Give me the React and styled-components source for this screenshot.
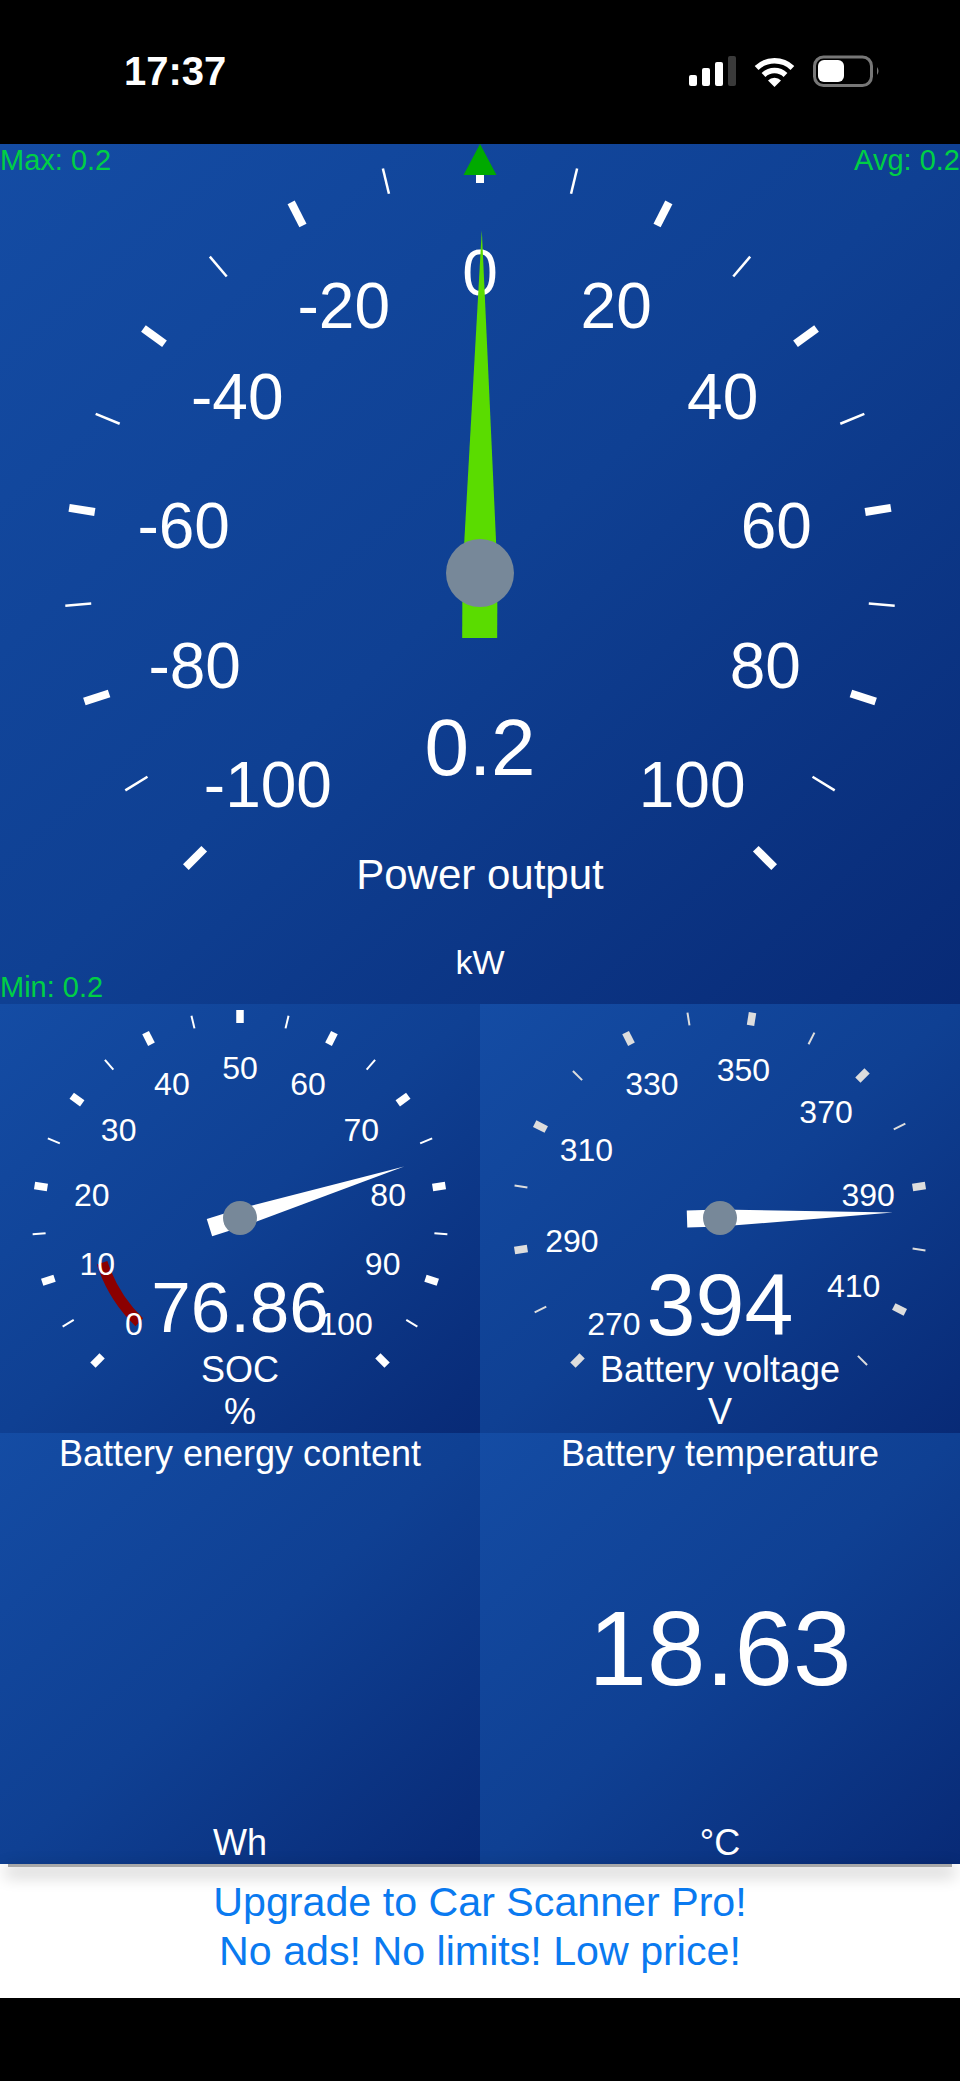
import styled, { createGlobalStyle } from "styled-components";

const GlobalStyle = createGlobalStyle`
  html, body {
    margin: 0;
    padding: 0;
    background: #000;
    font-family: "Liberation Sans", Arial, sans-serif;
  }
`;

const Screen = styled.div`
  width: 960px;
  height: 2081px;
  background: #000;
  color: #fff;
  display: flex;
  flex-direction: column;
  overflow: hidden;
`;

// Status bar
const StatusBar = styled.div`
  height: 144px;
  flex-shrink: 0;
  display: flex;
  align-items: flex-start;
  justify-content: space-between;
  padding: 0 80px 0 124px;
  box-sizing: border-box;
`;

const Clock = styled.div`
  margin-top: 49px;
  font-size: 40px;
  line-height: 44px;
  font-weight: 700;
`;

const StatusIcons = styled.svg`
  margin-top: 52px;
  width: 196px;
  height: 38px;
`;

// Panels
const Panel = styled.div`
  position: relative;
  height: ${(p) => p.$height}px;
  display: flex;
  flex-direction: column;
  align-items: center;
  justify-content: ${(p) => p.$justify || "flex-end"};
  background: linear-gradient(to bottom right, #144ca4 0%, #0f4093 50%, #082a76 100%);
  overflow: hidden;
`;

const Row = styled.div`
  display: grid;
  grid-template-columns: 1fr 1fr;
  position: relative;
`;

const BottomRow = styled(Row)`
  z-index: 2;
  &::after {
    content: "";
    position: absolute;
    left: 8px;
    right: 8px;
    bottom: -3px;
    height: 3px;
    background: #a8a8a8;
    box-shadow: 0 6px 16px 3px rgba(0, 0, 0, 0.22);
  }
`;

const Layer = styled.svg`
  position: absolute;
  inset: 0;
  width: 100%;
  height: 100%;
`;

const NeedleLayer = styled(Layer)`
  z-index: 2;
`;

const ScaleLabel = styled.span`
  position: absolute;
  z-index: 1;
  transform: translate(-50%, -50%);
  font-size: ${(p) => p.$size}px;
  line-height: 1;
  white-space: nowrap;
`;

const Stat = styled.div`
  position: absolute;
  z-index: 3;
  font-size: 29px;
  line-height: 30px;
  color: #00cf45;
  ${(p) => (p.$right ? "right: 0;" : "left: 0;")}
  ${(p) => (p.$bottom ? "bottom: 2px;" : "top: 1px;")}
`;

const Value = styled.div`
  position: relative;
  z-index: 3;
  font-size: ${(p) => p.$size}px;
  line-height: ${(p) => p.$line}px;
  margin-bottom: ${(p) => p.$gap || 0}px;
  white-space: nowrap;
`;

const BigValue = styled.div`
  flex: 1;
  display: flex;
  align-items: center;
  font-size: 105px;
  line-height: 1;
`;

const Caption = styled.div`
  position: relative;
  z-index: 3;
  font-size: ${(p) => p.$size || 36}px;
  line-height: ${(p) => p.$line || 42}px;
  margin-bottom: ${(p) => p.$gap || 0}px;
  white-space: nowrap;
`;

// Ad banner
const AdBanner = styled.div`
  height: 134px;
  flex-shrink: 0;
  background: #fff;
  color: #0a7af0;
  display: flex;
  flex-direction: column;
  align-items: center;
  padding-top: 14px;
  box-sizing: border-box;
  font-size: 41.2px;
  line-height: 48.5px;
`;

const polar = (cx, cy, r, deg) => {
  const a = ((deg - 90) * Math.PI) / 180;
  return [cx + r * Math.cos(a), cy + r * Math.sin(a)];
};

const Dial = ({ cx, cy, r, len, majorW, minorW, step, tickColor, arc }) => {
  const ticks = [];
  for (let i = 0; -135 + (i * step) / 2 <= 135.01; i++) {
    ticks.push({ deg: -135 + (i * step) / 2, major: i % 2 === 0 });
  }
  return (
    <Layer>
      {arc && (
        <path
          d={`M${polar(cx, cy, arc.r, arc.from).join(" ")} A${arc.r} ${arc.r} 0 0 1 ${polar(cx, cy, arc.r, arc.to).join(" ")}`}
          fill="none"
          stroke="#8b0000"
          strokeWidth={arc.w}
        />
      )}
      {ticks.map((t) => {
        const [x1, y1] = polar(cx, cy, r, t.deg);
        const [x2, y2] = polar(cx, cy, r - len, t.deg);
        return (
          <line
            key={t.deg}
            x1={x1}
            y1={y1}
            x2={x2}
            y2={y2}
            stroke={tickColor}
            strokeWidth={t.major ? majorW : minorW}
          />
        );
      })}
    </Layer>
  );
};

const Needle = ({ cx, cy, deg, length, tail, half, color, hub }) => (
  <NeedleLayer>
    <polygon
      transform={`translate(${cx} ${cy}) rotate(${deg})`}
      points={`0,${-length} ${half},0 ${half},${tail} ${-half},${tail} ${-half},0`}
      fill={color}
    />
    <circle cx={cx} cy={cy} r={hub} fill="#778899" />
  </NeedleLayer>
);

const Labels = ({ cx, cy, r, size, labels }) =>
  labels.map(([text, deg]) => {
    const [x, y] = polar(cx, cy, r, deg);
    return (
      <ScaleLabel key={text} $size={size} style={{ left: x, top: y }}>
        {text}
      </ScaleLabel>
    );
  });

const powerLabels = [-100, -80, -60, -40, -20, 0, 20, 40, 60, 80, 100].map((v) => [String(v), (v / 100) * 135]);
const socLabels = [0, 10, 20, 30, 40, 50, 60, 70, 80, 90, 100].map((v) => [String(v), -135 + v * 2.7]);
const voltLabels = [270, 290, 310, 330, 350, 370, 390, 410].map((v) => [String(v), -135 + (v - 270) * 1.8]);

const App = () => (
  <Screen>
    <GlobalStyle />
    <StatusBar>
      <Clock>17:37</Clock>
      <StatusIcons viewBox="684 52 196 38">
        <rect x="689" y="75" width="8" height="11" rx="2" fill="#fff" />
        <rect x="702" y="68" width="8" height="18" rx="2" fill="#fff" />
        <rect x="715" y="62" width="8" height="24" rx="2" fill="#fff" />
        <rect x="728" y="56" width="8" height="30" rx="2" fill="#3a3a3a" />
        <path d="M756.6 67.9 A26 26 0 0 1 792.4 67.9" fill="none" stroke="#fff" strokeWidth="5.5" />
        <path d="M763.5 74.9 A16 16 0 0 1 785.5 74.9" fill="none" stroke="#fff" strokeWidth="5.5" />
        <path d="M774.5 87 L768 80.5 A9 9 0 0 1 781 80.5 Z" fill="#fff" />
        <rect x="814.5" y="57" width="57" height="28.5" rx="9" fill="none" stroke="#777" strokeWidth="3" />
        <rect x="818" y="60" width="26" height="22" rx="6" fill="#fff" />
        <path d="M877 67 Q880 71 877 75 Z" fill="#777" />
      </StatusIcons>
    </StatusBar>

    <Panel $height={860}>
      <Stat>Max: 0.2</Stat>
      <Stat $right>Avg: 0.2</Stat>
      <Stat $bottom>Min: 0.2</Stat>
      <Dial cx={480} cy={429} r={416} len={26} majorW={8} minorW={2.5} step={27} tickColor="#fff" />
      <Labels cx={480} cy={429} r={300} size={64} labels={powerLabels} />
      <Needle cx={480} cy={429} deg={0.3} length={343} tail={65} half={17.5} color="#5adc00" hub={34} />
      <NeedleLayer>
        <polygon points="480,0 496.5,31 463.5,31" fill="#00aa00" />
      </NeedleLayer>
      <Value $size={80} $line={90} $gap={59}>0.2</Value>
      <Caption $size={42} $line={46} $gap={44}>Power output</Caption>
      <Caption $size={34} $line={40} $gap={22}>kW</Caption>
    </Panel>

    <Row>
      <Panel $height={429}>
        <Dial
          cx={240}
          cy={214}
          r={208}
          len={13}
          majorW={7.5}
          minorW={2}
          step={27}
          tickColor="#fff"
          arc={{ r: 145, from: -136, to: -108, w: 11 }}
        />
        <Labels cx={240} cy={214} r={150} size={32} labels={socLabels} />
        <Needle cx={240} cy={214} deg={72.6} length={172} tail={32} half={9} color="#fff" hub={17} />
        <Value $size={71} $line={76} $gap={3}>76.86</Value>
        <Caption $line={42}>SOC</Caption>
        <Caption $line={42}>%</Caption>
      </Panel>
      <Panel $height={429}>
        <Dial cx={240} cy={214} r={208} len={13} majorW={7.5} minorW={2} step={36} tickColor="#ddd" />
        <Labels cx={240} cy={214} r={150} size={32} labels={voltLabels} />
        <Needle cx={240} cy={214} deg={88.2} length={173} tail={33} half={8.5} color="#fff" hub={17} />
        <Value $size={88} $line={84} $gap={2}>394</Value>
        <Caption $line={42}>Battery voltage</Caption>
        <Caption $line={42}>V</Caption>
      </Panel>
    </Row>

    <BottomRow>
      <Panel $height={431} $justify="space-between">
        <Caption $line={42}>Battery energy content</Caption>
        <Caption $line={42}>Wh</Caption>
      </Panel>
      <Panel $height={431} $justify="space-between">
        <Caption $line={42}>Battery temperature</Caption>
        <BigValue>18.63</BigValue>
        <Caption $line={42}>°C</Caption>
      </Panel>
    </BottomRow>

    <AdBanner>
      <div>Upgrade to Car Scanner Pro!</div>
      <div>No ads! No limits! Low price!</div>
    </AdBanner>
  </Screen>
);

export default App;
